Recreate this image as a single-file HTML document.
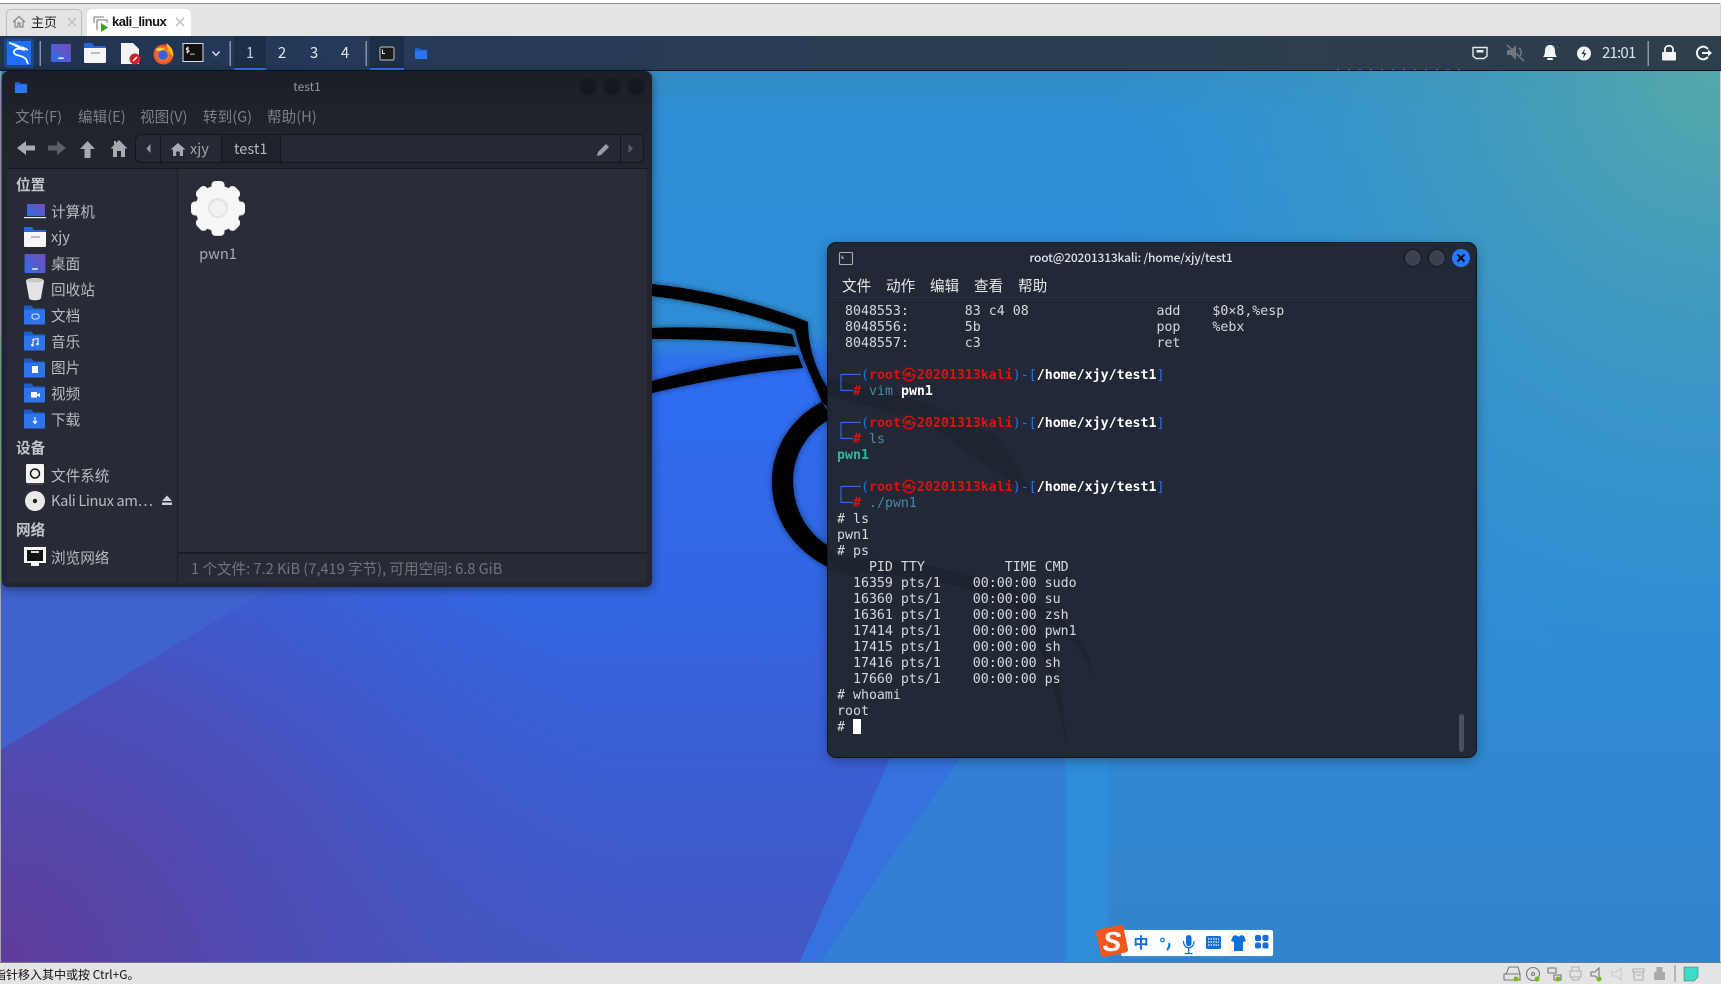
<!DOCTYPE html>
<html><head><meta charset="utf-8"><title>kali_linux</title>
<style>
html,body{margin:0;padding:0;width:1721px;height:984px;overflow:hidden;background:#e3e4e6}
body{font-family:"Noto Sans CJK SC","Liberation Sans",sans-serif;position:relative}
.a{position:absolute}
.t{position:absolute;white-space:nowrap;line-height:20px;height:20px}
svg{position:absolute;left:0;top:0}
.fm{font-size:14.6px;color:#b9bbc0}
.h{font-weight:700;color:#c2c4c8}
.mn{color:#7d8088}
.tm{color:#e9e9e9}
.term{position:absolute;left:837px;top:304px;font-family:"DejaVu Sans Mono","Liberation Mono","Noto Sans CJK SC",monospace;font-size:13.28px;color:#d6d9dc}
.term div{height:16px;line-height:16px;white-space:pre}
.b{color:#2f6fe0}.r{color:#e01010;font-weight:700}.w{color:#fff;font-weight:700}.c{color:#4d87a8}.g{color:#2eb89c;font-weight:700}
.m{display:inline-block;width:16px;text-align:center;font-family:"Noto Sans CJK SC",sans-serif;font-size:14px;line-height:16px;height:16px;vertical-align:top;color:#e01010;font-weight:700;position:relative;top:-1px}
</style></head><body>

<!-- wallpaper -->
<svg width="1721" height="984" viewBox="0 0 1721 984">
<defs>
<linearGradient id="wb" x1="0" y1="70" x2="0" y2="962" gradientUnits="userSpaceOnUse"><stop offset="0" stop-color="#328cc4"/><stop offset=".05" stop-color="#2e8ed4"/><stop offset=".2" stop-color="#2e8dd6"/><stop offset=".6" stop-color="#2f8cd4"/><stop offset="1" stop-color="#3284cc"/></linearGradient>
<radialGradient id="wt" cx="1721" cy="70" r="620" gradientUnits="userSpaceOnUse"><stop offset="0" stop-color="#55a8a8"/><stop offset=".5" stop-color="#46a0b8" stop-opacity=".55"/><stop offset="1" stop-color="#3a98c8" stop-opacity="0"/></radialGradient>
<linearGradient id="wc" x1="0" y1="360" x2="0" y2="962" gradientUnits="userSpaceOnUse"><stop offset="0" stop-color="#2d6cf0"/><stop offset=".4" stop-color="#3366e2"/><stop offset="1" stop-color="#4456c2"/></linearGradient>
<radialGradient id="wp" cx="0" cy="962" r="640" gradientUnits="userSpaceOnUse"><stop offset="0" stop-color="#5f3d9a"/><stop offset=".45" stop-color="#5247ac" stop-opacity=".7"/><stop offset="1" stop-color="#4456c2" stop-opacity="0"/></radialGradient>
<filter id="bl" x="-20%" y="-20%" width="140%" height="140%"><feGaussianBlur stdDeviation="12"/></filter>
<filter id="sh"><feGaussianBlur stdDeviation="3"/></filter>
<clipPath id="cw"><rect x="0" y="36" width="1721" height="927"/></clipPath>
<g id="lg">
<path d="M652 284C710 290 765 305 808 322C808 345 815 372 832 394L832 410L822 402C812 378 800 355 795 330C750 313 700 302 652 296Z"/>
<path d="M652 328C700 326 750 329 792 334L796 347C750 341 700 339 652 339Z"/>
<path d="M652 381C700 368 750 358 798 355L803 368C750 372 700 382 652 393Z"/>
<path d="M822 402C790 418 772 450 772 482C772 520 795 552 832 569L832 548C808 535 793 510 793 480C793 455 808 430 832 418Z"/>
</g>
</defs>
<g clip-path="url(#cw)">
<rect x="0" y="36" width="1721" height="927" fill="url(#wb)"/>
<rect x="0" y="36" width="1721" height="927" fill="url(#wt)"/>
<path d="M-60 350L840 350L840 480L-60 480Z" fill="#2d6cf0" filter="url(#bl)"/>
<path d="M-20 440L840 440L892 755L796 970L-20 970Z" fill="url(#wc)"/>
<path d="M0 962L0 750L274 586L800 586L800 962Z" fill="url(#wp)"/>
<path d="M0 750L274 586L0 586Z" fill="#3f62cc"/>
<path d="M892 755L962 755L815 970L796 970Z" fill="#3572de"/>
<path d="M962 755L1066 755L1066 970L815 970Z" fill="#337fd8"/>
<path d="M1066 755L1108 755L1108 970L1066 970Z" fill="#2f8cda"/>
<use href="#lg" fill="#000" opacity=".5" filter="url(#sh)"/>
<use href="#lg" fill="#000"/>
</g>
</svg>

<!-- chrome -->
<div class="a" style="left:0;top:0;width:1721px;height:3px;background:#fff"></div>
<div class="a" style="left:0;top:3px;width:1721px;height:33px;background:#e3e4e6;border-top:1px solid #8f8f8f;box-sizing:border-box"></div>
<div class="a" style="left:0;top:36px;width:1px;height:927px;background:#a8a8a8"></div>
<div class="a" style="left:1720px;top:3px;width:1px;height:960px;background:#d8d8d8"></div>
<div class="a" style="left:6px;top:9px;width:76px;height:27px;border:1px solid #bcbcbc;border-bottom:0;border-radius:5px 5px 0 0;box-sizing:border-box;background:#e3e4e6"></div>
<div class="a" style="left:87px;top:9px;width:104px;height:27px;background:#fff;border-radius:5px 5px 0 0"></div>
<div class="t" style="left:31px;top:12px;font-size:13px;color:#222">主页</div>
<div class="t" style="left:112px;top:12px;font-size:13px;font-weight:700;color:#111;font-family:'Liberation Sans',sans-serif;letter-spacing:-.5px">kali_linux</div>

<!-- panel -->
<div class="a" style="left:0;top:36px;width:1721px;height:34px;background:linear-gradient(90deg,#20344f 0,#25395a 20%,#2a3d52 50%,#2d3e4c 100%);border-bottom:1px solid #11161d;box-sizing:content-box"></div>
<div class="a" style="left:234px;top:36px;width:32px;height:32px;background:#1d2f47;border-bottom:2px solid #2b76ee"></div>
<div class="a" style="left:370px;top:36px;width:34px;height:32px;background:#1d2f47;border-bottom:2px solid #2b76ee"></div>
<div class="t" style="left:245px;top:43px;font-size:15px;color:#a9d4f2;width:10px;text-align:center">1</div>
<div class="t" style="left:277px;top:43px;font-size:15px;color:#e4e8ec;width:10px;text-align:center">2</div>
<div class="t" style="left:309px;top:43px;font-size:15px;color:#e4e8ec;width:10px;text-align:center">3</div>
<div class="t" style="left:340px;top:43px;font-size:15px;color:#e4e8ec;width:10px;text-align:center">4</div>
<div class="t" style="left:1602px;top:43px;font-size:15px;color:#dde6ee;letter-spacing:-.8px">21:01</div>
<div class="a" style="left:1337px;top:69px;width:124px;height:1px;background:repeating-linear-gradient(90deg,#2b76ee 0 2px,transparent 2px 11px)"></div>

<!-- file manager -->
<div class="a" style="left:2px;top:71px;width:650px;height:516px;background:linear-gradient(#1c1e27 0,#21232d 60px,#22252e 100px);border-radius:7px 7px 6px 6px;box-shadow:0 2px 10px rgba(0,0,0,.45)"></div>
<div class="a" style="left:7px;top:168px;width:640px;height:1px;background:#17191f"></div>
<div class="a" style="left:7px;top:169px;width:170px;height:414px;background:#282b36"></div>
<div class="a" style="left:177px;top:169px;width:1px;height:414px;background:#1b1d24"></div>
<div class="a" style="left:178px;top:169px;width:469px;height:383px;background:#2a2d38"></div>
<div class="a" style="left:178px;top:552px;width:469px;height:2px;background:#1c1e25"></div>
<div class="a" style="left:178px;top:554px;width:469px;height:29px;background:#282b35"></div>
<div class="a" style="left:135px;top:134px;width:509px;height:29px;box-sizing:border-box;border:1px solid #14161c;border-radius:6px;background:#262933"></div>
<div class="a" style="left:160px;top:135px;width:1px;height:27px;background:#14161c"></div>
<div class="a" style="left:221px;top:135px;width:60px;height:27px;background:#1f222b;border-left:1px solid #14161c;border-right:1px solid #14161c;box-sizing:border-box"></div>
<div class="a" style="left:620px;top:135px;width:1px;height:27px;background:#14161c"></div>

<div class="t" style="left:282px;top:77px;width:50px;text-align:center;font-size:12px;color:#94979e">test1</div>
<div class="t mn" style="left:15px;top:107px;font-size:14.6px">文件(F)</div>
<div class="t mn" style="left:78px;top:107px;font-size:14.6px">编辑(E)</div>
<div class="t mn" style="left:140px;top:107px;font-size:14.6px">视图(V)</div>
<div class="t mn" style="left:203px;top:107px;font-size:14.6px">转到(G)</div>
<div class="t mn" style="left:267px;top:107px;font-size:14.6px">帮助(H)</div>
<div class="t" style="left:190px;top:139px;font-size:14.6px;color:#9ea1a8">xjy</div>
<div class="t" style="left:234px;top:139px;font-size:14.6px;color:#b4b7bd">test1</div>

<div class="t fm h" style="left:16px;top:175px">位置</div>
<div class="t fm" style="left:51px;top:202px">计算机</div>
<div class="t fm" style="left:51px;top:227px">xjy</div>
<div class="t fm" style="left:51px;top:254px">桌面</div>
<div class="t fm" style="left:51px;top:280px">回收站</div>
<div class="t fm" style="left:51px;top:306px">文档</div>
<div class="t fm" style="left:51px;top:332px">音乐</div>
<div class="t fm" style="left:51px;top:358px">图片</div>
<div class="t fm" style="left:51px;top:384px">视频</div>
<div class="t fm" style="left:51px;top:410px">下载</div>
<div class="t fm h" style="left:16px;top:438px">设备</div>
<div class="t fm" style="left:51px;top:466px">文件系统</div>
<div class="t fm" style="left:51px;top:491px;letter-spacing:-.35px">Kali Linux am…</div>
<div class="t fm h" style="left:16px;top:520px">网络</div>
<div class="t fm" style="left:51px;top:548px">浏览网络</div>
<div class="t" style="left:198px;top:244px;width:40px;text-align:center;font-size:14.6px;color:#a8abb2">pwn1</div>
<div class="t" style="left:191px;top:559px;font-size:14.6px;color:#71747c">1 个文件: 7.2 KiB (7,419 字节), 可用空间: 6.8 GiB</div>

<!-- terminal -->
<div class="a" style="left:828px;top:243px;width:648px;height:514px;background:#222936;border-radius:8px;box-shadow:0 3px 12px rgba(0,0,0,.35),0 0 0 1px #141925;overflow:hidden"></div>
<div class="a" style="left:832px;top:297px;width:640px;height:1px;background:#2a3140"></div>
<svg width="1721" height="984" viewBox="0 0 1721 984">
<g fill="#000" opacity=".11">
<path d="M828 378L925 402L997 435L1018 468L1035 498L980 462L925 422L828 395Z"/>
<path d="M828 556C950 560 1085 590 1093 677C1075 610 960 575 828 570Z"/>
<path d="M1000 575C1050 620 1065 690 1066 748C1055 680 1040 630 1000 590Z"/>
<path d="M829 402C832 410 832 418 829 418ZM829 548L829 569L860 578L860 565Z"/>
</g>
</svg>
<div class="t" style="left:1000px;top:248px;width:262px;text-align:center;font-size:12px;font-weight:500;color:#dfe1e4;letter-spacing:-.17px">root@20201313kali: /home/xjy/test1</div>
<div class="t tm" style="left:842px;top:276px;font-size:14.6px">文件</div>
<div class="t tm" style="left:886px;top:276px;font-size:14.6px">动作</div>
<div class="t tm" style="left:930px;top:276px;font-size:14.6px">编辑</div>
<div class="t tm" style="left:974px;top:276px;font-size:14.6px">查看</div>
<div class="t tm" style="left:1018px;top:276px;font-size:14.6px">帮助</div>

<div class="term">
<div> 8048553:       83 c4 08                add    $0×8,%esp</div>
<div> 8048556:       5b                      pop    %ebx</div>
<div> 8048557:       c3                      ret</div>
<div> </div>
<div><span class="b">┌──(</span><span class="r">root<span class="m">㉿</span>20201313kali</span><span class="b">)-[</span><span class="w">/home/xjy/test1</span><span class="b">]</span></div>
<div><span class="b">└─</span><span class="r">#</span> <span class="c">vim</span> <span class="w">pwn1</span></div>
<div> </div>
<div><span class="b">┌──(</span><span class="r">root<span class="m">㉿</span>20201313kali</span><span class="b">)-[</span><span class="w">/home/xjy/test1</span><span class="b">]</span></div>
<div><span class="b">└─</span><span class="r">#</span> <span class="c">ls</span></div>
<div><span class="g">pwn1</span></div>
<div> </div>
<div><span class="b">┌──(</span><span class="r">root<span class="m">㉿</span>20201313kali</span><span class="b">)-[</span><span class="w">/home/xjy/test1</span><span class="b">]</span></div>
<div><span class="b">└─</span><span class="r">#</span> <span class="c">./pwn1</span></div>
<div># ls</div>
<div>pwn1</div>
<div># ps</div>
<div>    PID TTY          TIME CMD</div>
<div>  16359 pts/1    00:00:00 sudo</div>
<div>  16360 pts/1    00:00:00 su</div>
<div>  16361 pts/1    00:00:00 zsh</div>
<div>  17414 pts/1    00:00:00 pwn1</div>
<div>  17415 pts/1    00:00:00 sh</div>
<div>  17416 pts/1    00:00:00 sh</div>
<div>  17660 pts/1    00:00:00 ps</div>
<div># whoami</div>
<div>root</div>
<div># </div>
</div>
<div class="a" style="left:853px;top:719px;width:8px;height:15px;background:#fff"></div>
<div class="a" style="left:1459px;top:714px;width:5px;height:38px;background:#4a515e;border-radius:3px"></div>

<!-- status bar -->
<div class="a" style="left:0;top:962px;width:1721px;height:22px;background:#e3e4e6;border-top:1px solid #777;box-sizing:border-box"></div>
<div class="t" style="left:-6px;top:965px;font-size:12px;color:#111">指针移入其中或按 Ctrl+G。</div>

<!-- sogou -->
<div class="a" style="left:1121px;top:930px;width:152px;height:26px;background:#fff;border-radius:2px;box-shadow:0 0 1px #9ab"></div>

<!-- icons -->
<svg width="1721" height="984" viewBox="0 0 1721 984">
<defs>
<linearGradient id="dk" x1="0" y1="1" x2="1" y2="0"><stop offset="0" stop-color="#2b6fe8"/><stop offset="1" stop-color="#7a4ab8"/></linearGradient>
<radialGradient id="ffx" cx=".5" cy=".5" r=".6"><stop offset="0" stop-color="#ffb020"/><stop offset="1" stop-color="#e8362a"/></radialGradient>
<symbol id="fb" viewBox="0 0 22 20"><path d="M1 0H8L10 3H21Q22 3 22 5V20H1Q0 20 0 19V1Q0 0 1 0Z" fill="#1f5cc8"/><path d="M0 4.500H22V19Q22 20 21 20H1Q0 20 0 19Z" fill="#2f74ea"/></symbol>
<symbol id="fw" viewBox="0 0 22 20"><path d="M1 0H8L10 3H21Q22 3 22 5V8H0V1Q0 0 1 0Z" fill="#2668dc"/><path d="M0 5H22V19Q22 20 21 20H1Q0 20 0 19Z" fill="#f6f6f6"/><rect x="7" y="9" width="9" height="2" fill="#bdbdbd"/></symbol>
<symbol id="dsk" viewBox="0 0 22 20"><rect width="22" height="20" rx="1.500" fill="url(#dk)"/><rect x="8" y="15" width="6" height="1.500" fill="#fff"/></symbol>
<symbol id="tm" viewBox="0 0 22 20"><rect x=".5" y=".5" width="21" height="19" fill="#111" stroke="#e8e8e8"/><text x="3" y="10" font-size="8" font-family="DejaVu Sans Mono,monospace" font-weight="700" fill="#fff">$_</text></symbol>
</defs>

<!-- tabs -->
<path d="M13 22L19 16.500L25 22M15 21V27H18V23H20V27H23V21" fill="none" stroke="#888" stroke-width="1.200"/>
<path d="M68 18L76 26M76 18L68 26" stroke="#c5c5c5" stroke-width="1.600"/>
<path d="M176 18L184 26M184 18L176 26" stroke="#c5c5c5" stroke-width="1.600"/>
<path d="M94 23V17H104M97 30V20H107V23" fill="none" stroke="#777" stroke-width="1.100"/>
<path d="M101 23L108 27.500L101 32Z" fill="#3c9a1c"/>

<!-- panel icons -->
<rect x="4" y="38" width="30" height="30" rx="3" fill="#1f6fff" opacity=".3"/>
<rect x="7" y="41" width="24" height="24" fill="#1f6fff"/>
<path d="M9 43C16 44 22 48 25 50L21 49C17 48 13 50 14 53C15 56 22 55 26 59L28 64M12 44L20 48M22 47L28 50" fill="none" stroke="#fff" stroke-width="1.700"/>
<rect x="39.500" y="41" width="1.500" height="25" fill="#8494a4"/>
<use href="#dsk" x="50" y="44" width="22" height="18"/>
<use href="#fw" x="84" y="43" width="22" height="20"/>
<path d="M121 43H133L139 49V64H121Z" fill="#f4f4f4"/><circle cx="135" cy="59" r="5.500" fill="#d42027"/><path d="M133 61L137 57" stroke="#fff" stroke-width="1.500"/>
<circle cx="163.500" cy="54.500" r="10" fill="url(#ffx)"/><path d="M166 43C172 47 174 52 173 57L168 50Z" fill="#ffb81e"/><circle cx="163" cy="55" r="4.800" fill="#3a60e0"/><path d="M155 50C158 47 162 47 165 49L160 51Z" fill="#ffcf3a"/>
<use href="#tm" x="182" y="43" width="22" height="19"/>
<path d="M212.500 51.500L216 55.500L219.500 51.500" fill="none" stroke="#d8dde2" stroke-width="1.400"/>
<rect x="229.500" y="41" width="1.500" height="25" fill="#8494a4"/>
<rect x="365.500" y="41" width="1.500" height="25" fill="#8494a4"/>
<rect x="380" y="47" width="14" height="13" rx="1.500" fill="#1a1a1a" stroke="#a8a8a8" stroke-width="1.200"/><path d="M382.500 49.500V53.500L385 53.500" fill="none" stroke="#eee" stroke-width="1"/>
<use href="#fb" x="414" y="48" width="14" height="11"/>

<!-- right tray -->
<path d="M1473 47.500H1487V56L1484 58.500H1476L1473 56Z" fill="none" stroke="#e6e9ec" stroke-width="1.400"/><path d="M1476.500 50H1483.500V52.500H1476.500Z" fill="#e6e9ec"/>
<path d="M1507 50H1511L1516 45V60L1511 55H1507Z" fill="#6d7780"/><path d="M1519 48C1522 51 1522 54 1519 57" fill="none" stroke="#6d7780" stroke-width="1.600"/><path d="M1507 45L1524 61" stroke="#6d7780" stroke-width="1.600"/>
<path d="M1550 45C1554 45 1555 48 1555 51C1555 54 1556 56 1557 57H1543C1544 56 1545 54 1545 51C1545 48 1546 45 1550 45Z" fill="#f2f4f6"/><rect x="1547" y="58" width="6" height="2" rx="1" fill="#f2f4f6"/>
<circle cx="1584" cy="53.500" r="7" fill="#f2f4f6"/><path d="M1585 48.500L1581.500 54H1584L1583 58.500L1586.500 53H1584Z" fill="#2c3e4d"/>
<rect x="1647.500" y="41" width="1.500" height="25" fill="#8a98a4"/>
<path d="M1665 52V49.500C1665 44.500 1673 44.500 1673 49.500V52" fill="none" stroke="#f2f4f6" stroke-width="1.800"/><rect x="1662" y="52" width="14" height="8.500" rx="1" fill="#f2f4f6"/>
<path d="M1708 49C1703 44 1697 48 1697 53C1697 58 1703 62 1708 57" fill="none" stroke="#f2f4f6" stroke-width="2"/><path d="M1702 53H1709" stroke="#f2f4f6" stroke-width="2"/><path d="M1708 49.500L1712 53L1708 56.500Z" fill="#f2f4f6"/>

<!-- fm chrome -->
<use href="#fb" x="14" y="82" width="14" height="11"/>
<circle cx="588" cy="87" r="8.500" fill="#16181f"/><circle cx="612" cy="87" r="8.500" fill="#16181f"/><circle cx="636" cy="87" r="8.500" fill="#16181f"/>
<path d="M17 148L26 141V145.500H35V150.500H26V155Z" fill="#a8aab0"/>
<path d="M66 148L57 141V145.500H48V150.500H57V155Z" fill="#5c5f68"/>
<path d="M87.500 141L95 149H90.500V158H84.500V149H80Z" fill="#a8aab0"/>
<path d="M119 140L127.500 148.500H125V157H121V151H117V157H113V148.500H110.500L114 145V141H116V143Z" fill="#a8aab0"/>
<path d="M150.500 144L146.500 148.500L150.500 153Z" fill="#9a9da4"/>
<path d="M178 143L185.500 149.500H183V156H179.800V151.500H176.200V156H173V149.500H170.500Z" fill="#a8aab0"/>
<path d="M597 156L598 152L606 144L609 147L601 155Z" fill="#9a9da4"/>
<path d="M628.500 144L633 148.500L628.500 153Z" fill="#5c5f68"/>

<!-- sidebar icons -->
<path d="M27 204H45V216H27Z" fill="url(#dk)"/><rect x="24" y="217" width="22" height="1.200" fill="#f0f0f0"/>
<use href="#fw" x="24" y="227" width="22" height="20"/>
<use href="#dsk" x="24" y="254" width="22" height="19"/>
<path d="M26 281C26 277 44 277 44 281L41 298C41 301 29 301 29 298Z" fill="#e4e4e4"/><ellipse cx="35" cy="280.500" rx="8" ry="2" fill="#c8c8c8"/>
<use href="#fb" x="24" y="305" width="21" height="20"/><use href="#fb" x="24" y="331" width="21" height="20"/><use href="#fb" x="24" y="358" width="21" height="20"/><use href="#fb" x="24" y="383" width="21" height="20"/><use href="#fb" x="24" y="409" width="21" height="20"/>
<rect x="32" y="314" width="7" height="5" rx="2" fill="none" stroke="#dfe9fb" stroke-width="1"/>
<path d="M33 345V339.500L38 338.500V344" fill="none" stroke="#fff" stroke-width="1.100"/><circle cx="32.500" cy="345" r="1.300" fill="#fff"/><circle cx="37.500" cy="344" r="1.300" fill="#fff"/>
<rect x="32" y="366" width="6" height="7" fill="#fff"/>
<rect x="31" y="392" width="6" height="5.500" fill="#fff"/><path d="M37 394.500L40 393V397L37 395.500Z" fill="#fff"/>
<path d="M35 417V423M33 421L35 423.500L37 421" fill="none" stroke="#fff" stroke-width="1.100"/>
<rect x="26" y="464" width="18" height="19" rx="1" fill="#f4f4f4"/><circle cx="35" cy="473.500" r="4.500" fill="none" stroke="#111" stroke-width="1.500"/><rect x="27" y="483" width="16" height="2" fill="#444"/>
<circle cx="35" cy="501" r="10" fill="#e9e9e9"/><circle cx="35" cy="501" r="2.200" fill="#222"/>
<path d="M167 495.500L172 501H162Z" fill="#cfd1d5"/><rect x="162" y="502.500" width="10" height="2.500" fill="#cfd1d5"/>
<path d="M24 547H46V563H39V566H31V563H24Z" fill="#f6f6f6"/><rect x="27" y="550" width="16" height="11" fill="#111"/><rect x="31" y="551" width="8" height="2" fill="#d8d8d8"/>

<!-- gear -->
<g transform="translate(218 209)" fill="#d6d6d6">
<circle r="22.500"/>
<rect x="-6.500" y="-27" width="13" height="12" rx="4"/><rect x="-6.500" y="15" width="13" height="12" rx="4"/><rect x="-27" y="-6.500" width="12" height="13" rx="4"/><rect x="15" y="-6.500" width="12" height="13" rx="4"/>
<g transform="rotate(45)"><rect x="-6.500" y="-27" width="13" height="12" rx="4"/><rect x="-6.500" y="15" width="13" height="12" rx="4"/><rect x="-27" y="-6.500" width="12" height="13" rx="4"/><rect x="15" y="-6.500" width="12" height="13" rx="4"/></g>
</g>
<g transform="translate(218 208)" fill="#f7f7f7">
<circle r="22.500"/>
<rect x="-6.500" y="-27" width="13" height="12" rx="4"/><rect x="-6.500" y="15" width="13" height="12" rx="4"/><rect x="-27" y="-6.500" width="12" height="13" rx="4"/><rect x="15" y="-6.500" width="12" height="13" rx="4"/>
<g transform="rotate(45)"><rect x="-6.500" y="-27" width="13" height="12" rx="4"/><rect x="-6.500" y="15" width="13" height="12" rx="4"/><rect x="-27" y="-6.500" width="12" height="13" rx="4"/><rect x="15" y="-6.500" width="12" height="13" rx="4"/></g>
<circle r="10" fill="#e2e2e2"/><circle r="8" cy=".5" fill="#f2f2f2"/>
</g>

<!-- terminal chrome -->
<rect x="839.500" y="252.500" width="13" height="12" rx="1" fill="none" stroke="#aab0b8" stroke-width="1.100"/><path d="M842 255.500V258H844" fill="none" stroke="#d5d8dc" stroke-width=".9"/>
<circle cx="1413" cy="258" r="8.500" fill="#3a4150" stroke="#12161e"/>
<circle cx="1437" cy="258" r="8.500" fill="#3a4150" stroke="#12161e"/>
<circle cx="1461" cy="258" r="9" fill="#2777ff"/><path d="M1457.500 254.500L1464.500 261.500M1464.500 254.500L1457.500 261.500" stroke="#0a0f18" stroke-width="2"/>

<!-- sogou -->
<g transform="rotate(-12 1112 941)"><rect x="1098" y="927" width="28" height="28" rx="3" fill="#f2561f"/></g>
<text x="1112" y="951" font-size="28" font-weight="700" font-style="italic" font-family="Liberation Sans,sans-serif" text-anchor="middle" fill="#fff">S</text>
<text x="1141" y="948" font-size="15" font-weight="700" font-family="Noto Sans CJK SC,sans-serif" text-anchor="middle" fill="#0b6fe0">中</text>
<circle cx="1162.500" cy="940" r="1.800" fill="none" stroke="#0b6fe0" stroke-width="1.200"/><path d="M1169 943C1170 945 1169 948 1167 950" fill="none" stroke="#0b6fe0" stroke-width="2"/>
<rect x="1186" y="935" width="5.500" height="11" rx="2.700" fill="#0b6fe0"/><path d="M1183.500 941C1183.500 950 1194 950 1194 941M1188.700 948V953M1185 953.500H1192.500" fill="none" stroke="#0b6fe0" stroke-width="1.200"/>
<rect x="1206" y="936" width="15" height="13" rx="1.500" fill="#0b6fe0"/><path d="M1208 939H1219M1208 942H1219M1208 945H1219" stroke="#fff" stroke-width="1.200" stroke-dasharray="1.500 1"/>
<rect x="1228" y="932" width="21" height="22" fill="#fff7d8" opacity=".6"/>
<path d="M1233 936L1236 935C1237 937 1240 937 1241 935L1244 936L1246 941L1243 942V951H1234V942L1231 941Z" fill="#0b6fe0"/>
<rect x="1255" y="935" width="6" height="6" rx="2" fill="#0b6fe0"/><rect x="1262.500" y="935" width="6" height="6" rx="2" fill="#0b6fe0"/><rect x="1255" y="942.500" width="6" height="6" rx="2" fill="#0b6fe0"/><rect x="1262.500" y="942.500" width="6" height="6" rx="2" fill="#0b6fe0"/>

<!-- bottom tray -->
<g fill="none" stroke="#777" stroke-width="1.100">
<path d="M1506 974L1509 967H1518L1520 974V980H1504V974H1520"/>
<circle cx="1533" cy="974" r="6.500"/><circle cx="1533" cy="974" r="1.500"/>
<path d="M1548 973V968H1556V973H1548ZM1554 975H1561V980H1554Z"/>
</g>
<g fill="none" stroke="#b0b0b0" stroke-width="1.100">
<path d="M1570 971H1581V977H1570ZM1572 971V967H1579V971M1572 977V980H1579V977"/>
<path d="M1612 972H1616L1621 968V980L1616 976H1612Z" stroke="#ccc"/>
<path d="M1633 969H1644V972H1633ZM1634 972V980H1643V972M1636 975H1641"/>
</g>
<path d="M1591 972H1595L1599 968V980L1595 976H1591Z" fill="none" stroke="#777" stroke-width="1.100"/>
<path d="M1654 972H1665V980H1654ZM1656.500 972V967H1662.500V972" fill="#aaa"/>
<circle cx="1516" cy="979" r="2.500" fill="#7ab51d"/><circle cx="1537" cy="979" r="2.500" fill="#7ab51d"/><circle cx="1558" cy="979" r="2.500" fill="#7ab51d"/><circle cx="1599" cy="979" r="2.500" fill="#7ab51d"/>
<rect x="1674.500" y="965" width="1" height="17" fill="#888"/>
<path d="M1684 967H1698V977L1694 981H1684Z" fill="#3ddcc4" stroke="#666" stroke-width=".6"/>
</svg>
</body></html>
